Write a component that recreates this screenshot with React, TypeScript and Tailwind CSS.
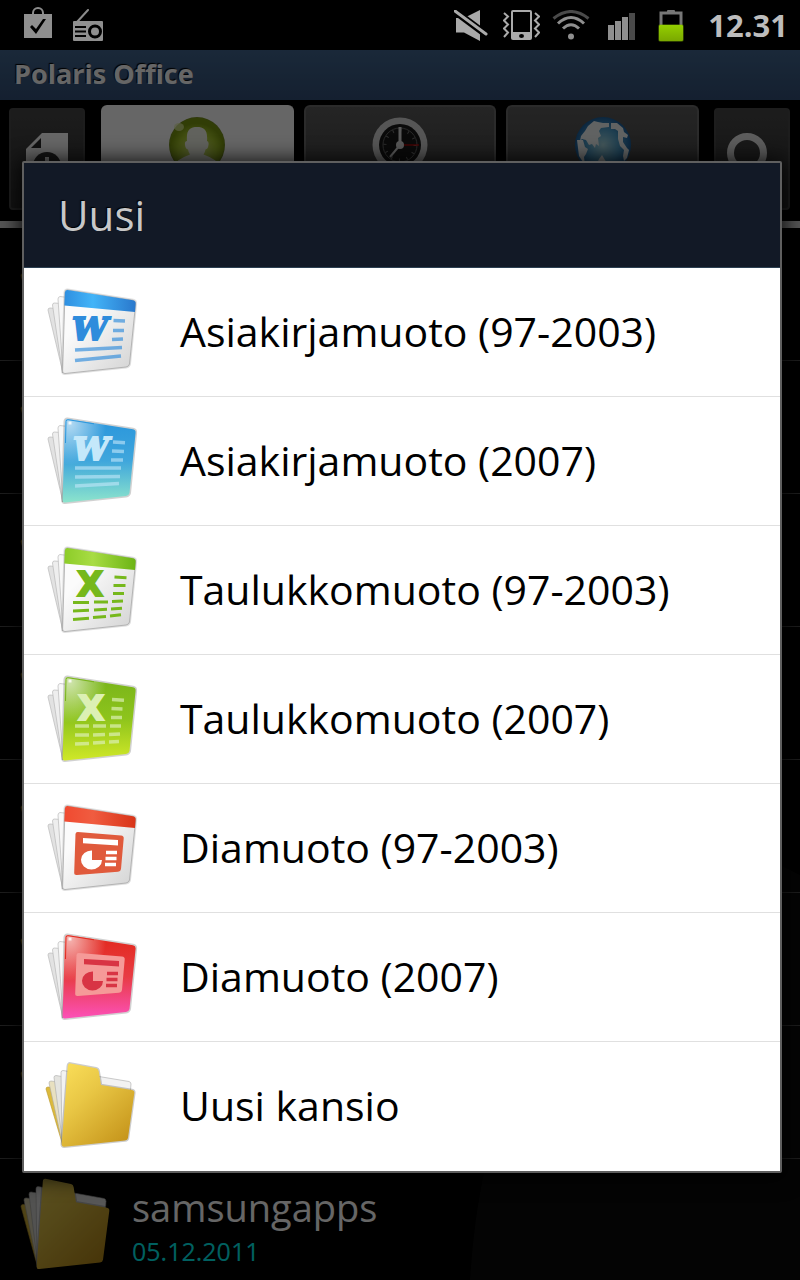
import type { ReactNode } from "react";

const FONT = "font-['Open_Sans','Noto_Sans',sans-serif]";

/* Status bar icons */

function BagIcon() {
  return (
    <svg width="28" height="32" viewBox="0 0 28 32" aria-hidden="true">
      <path d="M9 8V6a5 5 0 0 1 10 0v2" fill="none" stroke="#8c8c8c" strokeWidth="2" />
      <path d="M0 7h28v24H0z" fill="#8f8f8f" />
      <path d="M6 20l2-2 4 4 7-10 3 0-10 15z" fill="#000" />
    </svg>
  );
}

function RadioIcon() {
  return (
    <svg width="30" height="32" viewBox="0 0 30 32" aria-hidden="true">
      <path d="M4 13L15 1" stroke="#8c8c8c" strokeWidth="2" strokeLinecap="round" />
      <rect y="12" width="30" height="20" rx="1" fill="#8f8f8f" />
      <path d="M2 18h11M2 22.500h11M2 27h11" stroke="#000" strokeWidth="2" />
      <circle cx="22" cy="22.500" r="5.500" fill="none" stroke="#000" strokeWidth="3" />
    </svg>
  );
}

function MuteIcon() {
  return (
    <svg width="34" height="31" viewBox="0 0 34 31" aria-hidden="true">
      <path d="M2 8h8L26 0v31L10 22.500H2z" fill="#aaa" />
      <path d="M-2 -1L34 26" stroke="#000" strokeWidth="7" />
      <path d="M1 1L32 24" stroke="#aaa" strokeWidth="3" strokeLinecap="round" />
    </svg>
  );
}

function VibrateIcon() {
  return (
    <svg width="37" height="30" viewBox="0 0 37 30" aria-hidden="true">
      <rect x="8" width="21" height="30" rx="2" fill="#aaa" />
      <rect x="10" y="2" width="17" height="20" fill="#000" />
      <ellipse cx="18.500" cy="26" rx="2.500" ry="2" fill="#000" />
      <path
        d="M1 3l4 3.500-4 4 4 4-4 4 4 4-4 4.500M32 3l4 3.500-4 4 4 4-4 4 4 4-4 4.500"
        fill="none"
        stroke="#aaa"
        strokeWidth="2"
      />
    </svg>
  );
}

function WifiIcon() {
  return (
    <svg width="38" height="30" viewBox="0 0 38 30" fill="none" strokeWidth="3" aria-hidden="true">
      <path d="M1.500 8.500Q19 -5.500 36.500 8.500" stroke="#4a4a4a" />
      <path d="M6 13.500Q19 1.500 32 13.500" stroke="#8f8f8f" />
      <path d="M11 18.500Q19 11 27 18.500" stroke="#8f8f8f" />
      <circle cx="19" cy="26.500" r="3" fill="#8f8f8f" />
    </svg>
  );
}

function SignalIcon() {
  return (
    <svg width="27" height="30" viewBox="0 0 27 30" fill="#8f8f8f" aria-hidden="true">
      <path d="M0 15h6v15H0zM7 11h6v19H7zM14 7h6v23h-6z" />
      <path d="M21 3h6v27h-6z" fill="#4a4a4a" />
    </svg>
  );
}

function BatteryIcon() {
  return (
    <svg width="26" height="33" viewBox="0 0 26 33" aria-hidden="true">
      <defs>
        <linearGradient id="charge" x2="0" y2="1">
          <stop stopColor="#94cf00" />
          <stop offset="1" stopColor="#7aa800" />
        </linearGradient>
      </defs>
      <path d="M9 2q0-1 1-1h6q1 0 1 1v2H9z" fill="#777" />
      <path d="M3 16V4h20v12" fill="none" stroke="#777" strokeWidth="3" />
      <rect x="0" y="15" width="26" height="18" rx="3" fill="#7fb000" opacity=".35" />
      <rect x="1" y="16" width="24" height="16" rx="1" fill="url(#charge)" />
    </svg>
  );
}

/* Toolbar icons */

function NewFileIcon() {
  return (
    <svg width="42" height="52" viewBox="0 0 42 52" aria-hidden="true">
      <path d="M16 0h26v52H0V16z" fill="#fff" />
      <path d="M15 5v10H5z" fill="#2c2c2c" />
      <circle cx="21" cy="33" r="14" fill="#333" />
      <path d="M21 24v18M12 33h18" stroke="#fff" strokeWidth="4" />
    </svg>
  );
}

function SearchIcon() {
  return (
    <svg width="52" height="52" viewBox="0 0 52 52" fill="none" stroke="#e8e8e8" aria-hidden="true">
      <circle cx="21" cy="20" r="16.500" strokeWidth="7" />
      <path d="M33 33l15 15" strokeWidth="8" />
    </svg>
  );
}

function UserIcon() {
  return (
    <svg width="58" height="58" viewBox="0 0 58 58" aria-hidden="true">
      <defs>
        <radialGradient id="user-ball" cy=".6">
          <stop stopColor="#d6e884" />
          <stop offset=".7" stopColor="#a3c22b" />
          <stop offset="1" stopColor="#7c9a10" />
        </radialGradient>
        <clipPath id="user-clip">
          <circle cx="29" cy="29" r="27" />
        </clipPath>
      </defs>
      <circle cx="29" cy="29" r="28" fill="#789022" />
      <circle cx="29" cy="29" r="27" fill="url(#user-ball)" />
      <ellipse cx="11" cy="11" rx="5" ry="4" fill="#e4f0a8" opacity=".7" />
      <path
        clipPath="url(#user-clip)"
        d="M19 25C18 14 22 11 29 11s11 3 10 14q2 0 1.500 4-.5 4-3 4.500-.5 3-2 5 6 2 12 6V60H10V44.500q6-4 12-6-1.500-2-2-5-2.500-.5-3-4.500-.5-4 2-4z"
        fill="#f3f5e8"
      />
    </svg>
  );
}

function RecentIcon() {
  return (
    <svg width="58" height="58" viewBox="0 0 58 58" aria-hidden="true">
      <circle cx="29" cy="29" r="27.500" fill="#d8d8d8" />
      <circle cx="29" cy="29" r="21" fill="#1a1a1a" />
      <circle cx="29" cy="29" r="17" fill="none" stroke="#666" strokeWidth="1" />
      <circle cx="29" cy="29" r="15" fill="none" stroke="#777" strokeWidth="3" strokeDasharray="1 6.850" />
      <path d="M29 29V11" stroke="#ddd" strokeWidth="3" />
      <path d="M29 29L19 41" stroke="#ddd" strokeWidth="2" />
      <path d="M29 29h19" stroke="#f00000" />
      <circle cx="29" cy="29" r="4" fill="#ddd" />
    </svg>
  );
}

function WebIcon() {
  return (
    <svg width="58" height="58" viewBox="0 0 58 58" aria-hidden="true">
      <defs>
        <radialGradient id="sea">
          <stop stopColor="#a9d8e0" />
          <stop offset=".6" stopColor="#4c9cc8" />
          <stop offset="1" stopColor="#1c5f9c" />
        </radialGradient>
      </defs>
      <circle cx="29" cy="29" r="28" fill="url(#sea)" />
      <g fill="#f0f4f4">
        <path d="M7 20l4-5 3-5 6-5 4 1 5 1h6v4l-8 1-2 3 2 5-3 2 1 8-3-2-1 4-3-4-3 1-3-5-4-1-2 2z" />
        <path d="M37 7l6 0 6 5 1 4 4 3-1 3-4-1 0 5 4 6 2 2-2 8-3 3-1-5 1-6-4-4-2-7 0-8-3-2-4 0z" />
        <path d="M3 24l6 0 2 7 3 2-2 5-2 3 1 8-6-9z" />
        <path d="M25 43l3-4 3 5 4 6-6 5-8-3z" />
      </g>
    </svg>
  );
}

/* File type icons */

function BackPages() {
  return (
    <g stroke="#b9b9b9" strokeWidth=".7">
      <path d="M4 26q0-2 2-2l14 1-1 64z" fill="#e2e2e2" />
      <path d="M8.500 21q0-2 2-2l12 1-4 69z" fill="#eee" />
      <path d="M14 15q0-2 2-2.500l8 1-5 75z" fill="#f8f8f8" />
    </g>
  );
}

const PAGE = "M23.500 6L89 16.300Q92 17 91.600 20L85.500 80Q85 82.500 82 83L21 89.500Q18.500 89.800 18.600 87L21 8.500Q21.200 5.700 23.500 6z";

type Tint = { id: string; from: string; mid: string; to: string };

function ClassicPage({ tint, children }: { tint: Tint; children: ReactNode }) {
  return (
    <svg className="size-24 shrink-0" viewBox="0 0 96 96" aria-hidden="true">
      <defs>
        <linearGradient id={tint.id}>
          <stop stopColor={tint.from} />
          <stop offset=".4" stopColor={tint.mid} />
          <stop offset="1" stopColor={tint.to} />
        </linearGradient>
        <linearGradient id={`${tint.id}-paper`} x2="1" y2="1">
          <stop offset=".3" stopColor="#fbfbfb" />
          <stop offset="1" stopColor="#d2d2d2" />
        </linearGradient>
      </defs>
      <BackPages />
      <path d={PAGE} fill="none" stroke="#000" strokeWidth="3" opacity=".12" />
      <path d={PAGE} fill={`url(#${tint.id}-paper)`} stroke="#a8a8a8" strokeWidth=".8" />
      <path
        d="M23.500 6L89 16.300Q92 17 91.600 20L91 28 20.300 21.500 20.900 8.500Q21.200 5.700 23.500 6z"
        fill={`url(#${tint.id})`}
      />
      {children}
    </svg>
  );
}

function ModernPage({ tint, children }: { tint: Tint; children: ReactNode }) {
  return (
    <svg className="size-24 shrink-0" viewBox="0 0 96 96" aria-hidden="true">
      <defs>
        <linearGradient id={tint.id} x2="0" y2="1">
          <stop stopColor={tint.from} />
          <stop offset=".5" stopColor={tint.mid} />
          <stop offset="1" stopColor={tint.to} />
        </linearGradient>
        <radialGradient id={`${tint.id}-shine`} cx=".1" cy=".05" r=".5">
          <stop stopColor="#fff" stopOpacity=".65" />
          <stop offset="1" stopColor="#fff" stopOpacity="0" />
        </radialGradient>
      </defs>
      <BackPages />
      <path d={PAGE} fill="none" stroke="#000" strokeWidth="3" opacity=".18" />
      <path d={PAGE} fill={`url(#${tint.id})`} />
      <path d={PAGE} fill={`url(#${tint.id}-shine)`} />
      <path d="M21.500 30L22 8.500q.2-2 2-1.800L50 10.800" fill="none" stroke={tint.from} />
      <path d="M24.500 8.500h3v3h-3z" fill="#fff" opacity=".8" />
      {children}
    </svg>
  );
}

function WordArt({ ink, lines }: { ink: string; lines: string }) {
  return (
    <>
      <text
        x="28"
        y="56"
        fill={ink}
        stroke={ink}
        strokeWidth="2"
        className="font-['DejaVu_Serif',serif] text-[32px] font-bold italic"
      >
        W
      </text>
      <path d={lines} stroke={ink} strokeWidth="3.500" opacity=".65" />
    </>
  );
}

function SheetArt({ ink, cells }: { ink: string; cells: string }) {
  return (
    <>
      <text
        x="33"
        y="54"
        fill={ink}
        stroke={ink}
        strokeWidth="2"
        className="font-['DejaVu_Sans',sans-serif] text-[34px] font-bold"
      >
        X
      </text>
      <path d={cells} stroke={ink} strokeWidth="3" />
    </>
  );
}

function SlideArt({ board, ink }: { board: string; ink: string }) {
  return (
    <>
      <path
        d="M34 32L77 35.500q3 .3 2.700 3L77 69q-.3 2.500-3 2.700L33 75q-3 .2-2.800-2.500L31.500 34q.2-2.200 2.500-2z"
        fill={board}
      />
      <path d="M39 38l35 2v5.500l-35-2.200z" fill={ink} />
      <path d="M48 50.500V60h10a10.500 9.500 0 1 1-10-9.500z" fill={ink} />
      <path d="M62 52.500h11M61.500 58.500h11M61 64.500h11" stroke={ink} strokeWidth="3.300" />
    </>
  );
}

function FolderIcon({ id, className }: { id: string; className: string }) {
  return (
    <svg className={className} viewBox="0 0 96 96" preserveAspectRatio="none" aria-hidden="true">
      <defs>
        <linearGradient id={id} x2=".8" y2="1">
          <stop stopColor="#fbdf5a" />
          <stop offset=".4" stopColor="#e9c745" />
          <stop offset="1" stopColor="#c6951b" />
        </linearGradient>
      </defs>
      <path d="M2 31q0-2 2-2l18 2-3 57z" fill="#dcba3c" stroke="#b8962a" strokeWidth=".6" />
      <g stroke="#aaa" strokeWidth=".6">
        <path d="M5 25q0-2 2-2l16 2-4 63z" fill="#e8e0c0" />
        <path d="M10 19.500q0-2 2-2l12 2-5 68z" fill="#e4e4e0" />
        <path d="M17 14.500q0-2 2-2l66 11q2 .5 2 2.500l-1 12-68 49z" fill="#f2f2f2" />
      </g>
      <path
        d="M26.500 5.400L52 10.200q2.300.5 2.700 3L57 27l31 5q2.600.5 2.300 3L84 80q-.4 2.300-3 2.600L20.500 88.700q-2.900.3-2.800-2.700L23.800 8q.2-3 2.700-2.600z"
        fill="none"
        stroke="#000"
        strokeWidth="2.500"
        opacity=".2"
      />
      <path
        d="M26.500 5.400L52 10.200q2.300.5 2.700 3L57 27l31 5q2.600.5 2.300 3L84 80q-.4 2.300-3 2.600L20.500 88.700q-2.900.3-2.800-2.700L23.800 8q.2-3 2.700-2.600z"
        fill={`url(#${id})`}
      />
    </svg>
  );
}

const wordClassicLines = "M69.500 36.500l11.500.5M69 46.500l11 0M68 55.500l11-.5M31 66l47-2.500M31 76.500l46-4.500";
const wordModernLines =
  "M69 29l12 .7M68 38l12 .5M67 47h12M31 55h46M31 64l45-.5M31 73l44-2.500";
const sheetClassicCells =
  "M70.500 35l12 .7M69.500 43.500h12M69 51.500h11M29 60.500h16M50 60h14M68 59.500l11-.5M29 69l16-.8M50 68l13-.8M67 67l11-.7M29 77.500l16-1.200M49 75.500l13-1M66 74l11-1.200";
const sheetModernCells =
  "M68 28.500l12 .7M67.500 37.500l11 .5M67 46.500h11M31 55h14M49 55h13M66 55h11M31 64h14M49 64l12-.5M65 63.500l11-.5M31 73l14-.5M49 72l12-.7M65 71l10-.5";

const formats: { label: string; icon: ReactNode }[] = [
  {
    label: "Asiakirjamuoto (97-2003)",
    icon: (
      <ClassicPage tint={{ id: "doc", from: "#2f8fe0", mid: "#42b4f8", to: "#2a78cc" }}>
        <WordArt ink="#2f8cdc" lines={wordClassicLines} />
      </ClassicPage>
    ),
  },
  {
    label: "Asiakirjamuoto (2007)",
    icon: (
      <ModernPage tint={{ id: "docx", from: "#2a96dc", mid: "#3fa6dc", to: "#8ce4cc" }}>
        <g transform="translate(1 -9)">
          <WordArt ink="#c4e8fa" lines="" />
        </g>
        <path d={wordModernLines} stroke="#c4e8fa" strokeWidth="3.500" opacity=".6" />
      </ModernPage>
    ),
  },
  {
    label: "Taulukkomuoto (97-2003)",
    icon: (
      <ClassicPage tint={{ id: "xls", from: "#8ccc28", mid: "#a8dc44", to: "#6cb414" }}>
        <SheetArt ink="#76b81c" cells={sheetClassicCells} />
      </ClassicPage>
    ),
  },
  {
    label: "Taulukkomuoto (2007)",
    icon: (
      <ModernPage tint={{ id: "xlsx", from: "#78b41a", mid: "#8ec41c", to: "#d0e828" }}>
        <g transform="translate(1 -5)">
          <SheetArt ink="#dcf0b4" cells="" />
        </g>
        <path d={sheetModernCells} stroke="#dcf0b4" strokeWidth="3.500" opacity=".7" />
      </ModernPage>
    ),
  },
  {
    label: "Diamuoto (97-2003)",
    icon: (
      <ClassicPage tint={{ id: "ppt", from: "#f04a30", mid: "#f05c40", to: "#d83418" }}>
        <SlideArt board="#e05a3c" ink="#fff" />
      </ClassicPage>
    ),
  },
  {
    label: "Diamuoto (2007)",
    icon: (
      <ModernPage tint={{ id: "pptx", from: "#e2281c", mid: "#e83c44", to: "#fc50b8" }}>
        <g transform="translate(1 -8)">
          <SlideArt board="#f59a98" ink="#d83444" />
        </g>
      </ModernPage>
    ),
  },
  {
    label: "Uusi kansio",
    icon: <FolderIcon id="new-folder" className="size-24 shrink-0" />,
  },
];

const files = [
  { id: "f1" },
  { id: "f2" },
  { id: "f3" },
  { id: "f4" },
  { id: "f5" },
  { id: "f6" },
  { id: "f7" },
  { id: "f8", name: "samsungapps", date: "05.12.2011" },
];

function StatusCell({ children }: { children: ReactNode }) {
  return <span className="flex w-[50px] items-center justify-center">{children}</span>;
}

function StatusBar() {
  return (
    <header className="relative z-10 flex h-[50px] shrink-0 items-center justify-between bg-black pr-3 pl-[13px]">
      <div className="flex items-center">
        <StatusCell>
          <span className="pb-1">
            <BagIcon />
          </span>
        </StatusCell>
        <StatusCell>
          <RadioIcon />
        </StatusCell>
      </div>
      <div className="flex items-center">
        <StatusCell>
          <MuteIcon />
        </StatusCell>
        <StatusCell>
          <VibrateIcon />
        </StatusCell>
        <StatusCell>
          <WifiIcon />
        </StatusCell>
        <StatusCell>
          <SignalIcon />
        </StatusCell>
        <StatusCell>
          <BatteryIcon />
        </StatusCell>
        <time className="ml-3 text-[31px] leading-[50px] font-bold text-[#bdbdbd]">12.31</time>
      </div>
    </header>
  );
}

function Toolbar() {
  const sideButton =
    "mt-2 flex h-[102px] w-[76px] shrink-0 justify-center rounded-sm border-2 border-[#4a4a4a] bg-linear-to-b from-[#484848] to-[#303030] pt-[23px]";
  const tab =
    "mt-[5px] flex h-[116px] flex-1 items-start justify-center rounded-t-md border-2 border-b-0 pt-[9px]";
  const idleTab = "border-[#6c6c6c] bg-linear-to-b from-[#5c5c5c] to-[#383838]";
  return (
    <nav className="flex h-[128px] shrink-0 border-b-[7px] border-[#d8d8d8] pr-[10px] pl-[9px]">
      <button type="button" aria-label="Uusi" className={sideButton}>
        <NewFileIcon />
      </button>
      <div className="mr-[15px] ml-4 flex flex-1 gap-[10px]">
        <button type="button" aria-label="Omat" className={`${tab} border-white bg-white`}>
          <UserIcon />
        </button>
        <button type="button" aria-label="Viimeisimmät" className={`${tab} ${idleTab}`}>
          <RecentIcon />
        </button>
        <button type="button" aria-label="Verkko" className={`${tab} ${idleTab}`}>
          <WebIcon />
        </button>
      </div>
      <button type="button" aria-label="Haku" className={sideButton}>
        <SearchIcon />
      </button>
    </nav>
  );
}

function FileList() {
  return (
    <ul className="relative">
      {files.map((file) => (
        <li
          key={file.id}
          className="flex h-[133px] items-center gap-[17px] border-b border-[#4a4a4a] pl-[19px]"
        >
          <FolderIcon id={file.id} className="h-[104px] w-24 shrink-0 opacity-90" />
          {file.name && (
            <div className="flex flex-col gap-0.5 pt-0.5">
              <p className="text-[38px] leading-[48px] text-white">{file.name}</p>
              <p className="text-[25px] leading-[36px] text-[#00f0f0]">{file.date}</p>
            </div>
          )}
        </li>
      ))}
    </ul>
  );
}

function NewFileDialog() {
  return (
    <section
      role="dialog"
      aria-labelledby="dialog-title"
      className="w-full rounded-xs border-2 border-[#5f5f5f] bg-white shadow-[0_2px_20px_4px_rgba(0,0,0,0.8)]"
    >
      <h2
        id="dialog-title"
        className="border-b border-[#2c4052] bg-[#121926] px-[34px] text-[42px] leading-[104px] text-[#c8c8c8] [text-shadow:-1px_-1px_1px_#000]"
      >
        Uusi
      </h2>
      <ul>
        {formats.map((format) => (
          <li key={format.label} className="border-b border-[#e0e0e0] last:border-white">
            <button
              type="button"
              className="flex h-32 w-full items-center gap-10 pl-5 text-left text-[41px] text-black"
            >
              {format.icon}
              {format.label}
            </button>
          </li>
        ))}
      </ul>
    </section>
  );
}

export default function App() {
  return (
    <div className={`relative flex h-screen flex-col overflow-hidden bg-black ${FONT}`}>
      <StatusBar />
      <main className="relative flex flex-1 flex-col overflow-hidden">
        <svg
          className="absolute right-0 bottom-0"
          width="330"
          height="420"
          viewBox="0 0 330 420"
          aria-hidden="true"
        >
          <path d="M0 420Q20 80 290 -5L330 15V420z" fill="#0b0b0b" />
        </svg>
        <h1 className="relative h-[50px] shrink-0 bg-linear-to-b from-[#42668f] to-[#345078] pl-[14px] text-[27px] leading-[48px] font-bold text-white [text-shadow:-1px_-1px_1px_#000]">
          Polaris Office
        </h1>
        <Toolbar />
        <FileList />
      </main>
      <div className="absolute inset-x-0 top-[50px] bottom-0 flex items-center bg-black/60 pt-1 pr-[18px] pl-[22px]">
        <NewFileDialog />
      </div>
    </div>
  );
}
